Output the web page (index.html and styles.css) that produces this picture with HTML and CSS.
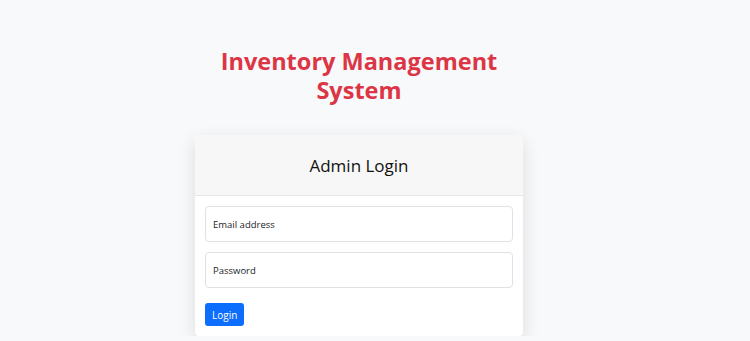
FILE: index.html
```html
<!DOCTYPE html>
<html lang="en">
<head>
  <meta charset="UTF-8" />
  <meta name="viewport" content="width=device-width, initial-scale=1.0"/>
  <title>Inventory Management System</title>
  <link rel="stylesheet" href="styles.css">
</head>
<body>

<main class="wrap">
  <h1 class="titulo">Inventory Management<br>System</h1>

  <div class="card">
    <div class="card-header">Admin Login</div>
    <form class="card-body">
      <input type="email" class="campo" placeholder="Email address" />
      <input type="password" class="campo" placeholder="Password" />
      <button type="button" class="btn">Login</button>
    </form>
  </div>
</main>

</body>
</html>
```

FILE: styles.css
```css
* { box-sizing: border-box; }

body {
  font-family: 'Open Sans', 'Noto Sans', sans-serif;
  margin: 0;
  background: #f8f9fa;
  color: #212529;
}

.wrap {
  display: flex;
  flex-direction: column;
  align-items: center;
  padding: 47px 32px 0 0;
}

.titulo {
  color: #dc3545;
  font-size: 23.5px;
  font-weight: 700;
  line-height: 29px;
  text-align: center;
  margin: 0 0 30px;
}

.card {
  width: 328px;
  background: white;
  border-radius: 4px;
  box-shadow: 0 6px 18px rgba(0, 0, 0, 0.12);
  overflow: hidden;
}

.card-header {
  background: #f7f7f7;
  border-bottom: 1px solid #e6e6e6;
  height: 61px;
  display: flex;
  align-items: center;
  justify-content: center;
  font-size: 17px;
  color: #111;
}

.card-body {
  display: flex;
  flex-direction: column;
  align-items: flex-start;
  gap: 10px;
  padding: 10px;
  margin: 0;
}

.campo {
  width: 100%;
  height: 36px;
  padding: 0 7px;
  border: 1px solid #dee2e6;
  border-radius: 4px;
  font-family: inherit;
  font-size: 9.5px;
  color: #212529;
}

.campo::placeholder {
  color: #212529;
}

.btn {
  margin-top: 5px;
  height: 23px;
  padding: 0 7px;
  background-color: #0d6efd;
  color: white;
  border: none;
  border-radius: 3px;
  font-family: inherit;
  font-size: 10px;
  cursor: pointer;
}
```
